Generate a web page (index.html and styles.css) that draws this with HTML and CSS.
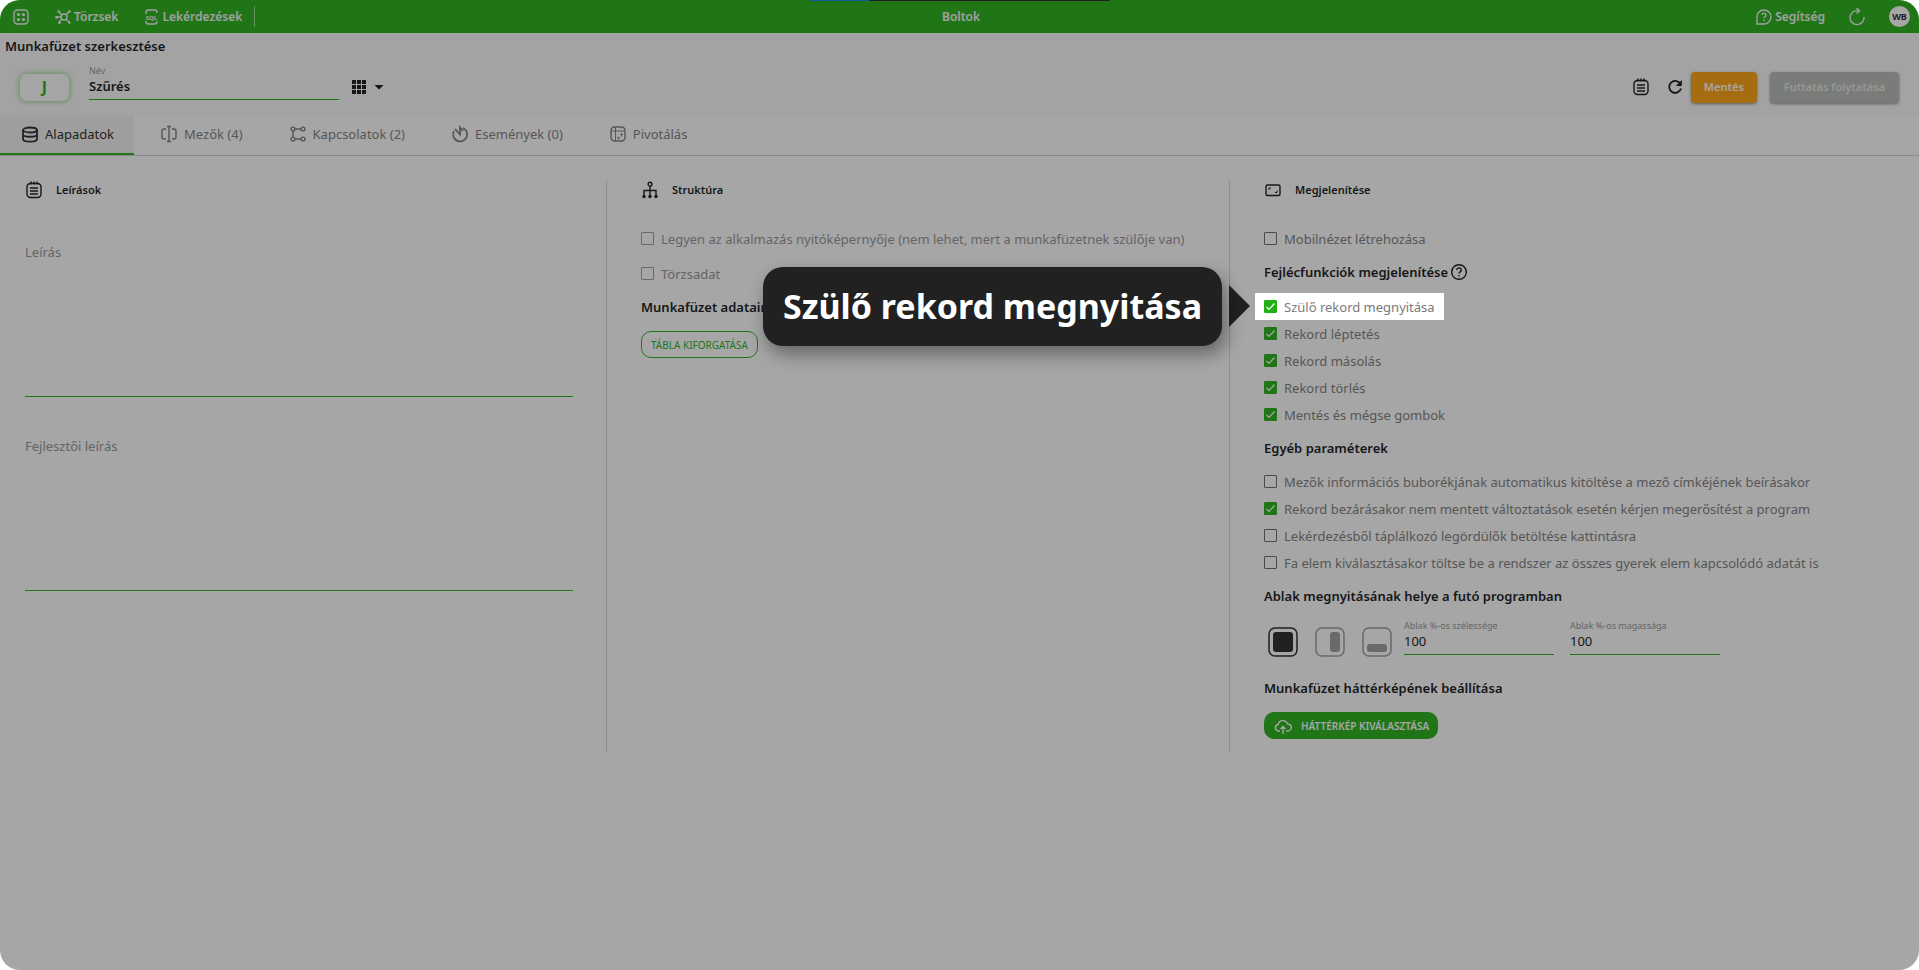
FILE: index.html
```html
<!DOCTYPE html>
<html lang="hu">
<head>
<meta charset="utf-8">
<title>Boltok</title>
<link rel="stylesheet" href="styles.css">
</head>
<body>
<svg class="defs" aria-hidden="true">
  <symbol id="i-notes" viewBox="0 0 18 18"><rect x="2" y="2.5" width="14" height="14" rx="3.5"/><path d="M6 .5v3M9 .5v3M12 .5v3M5 7h8M5 10h8M5 13h8"/></symbol>
  <symbol id="i-help" viewBox="0 0 18 18"><circle cx="9" cy="9" r="7.3"/><path d="M6.8 7a2.2 2.2 0 1 1 3.3 2c-.8.4-1.1.8-1.1 1.6M9 12v1.4"/></symbol>
</svg>
<div class="page">
  <header class="topbar">
    <nav class="topnav">
      <button class="iconbtn" aria-label="Alkalmazások"><svg class="icon" viewBox="0 0 18 18"><rect x="2" y="2" width="14" height="14" rx="3.5"/><g class="solid"><circle cx="6.5" cy="6.5" r="1.6"/><circle cx="11.5" cy="6.5" r="1.6"/><circle cx="6.5" cy="11.5" r="1.6"/><circle cx="11.5" cy="11.5" r="1.6"/></g></svg></button>
      <a class="toplink" href="#"><svg class="icon" viewBox="0 0 18 18"><circle cx="10" cy="9" r="3"/><path d="M7.8 6.800 5 4M12 6.800 15 4M7.800 11.200 5 14M12 11.200 15 14M7 9H3"/><g class="solid"><circle cx="4.800" cy="3.500" r="1.300"/><circle cx="15.300" cy="3.500" r="1.300"/><circle cx="5.500" cy="14.800" r="1.300"/><circle cx="15.300" cy="14.500" r="1.300"/><circle cx="2.500" cy="9.400" r="1.300"/></g></svg>Törzsek</a>
      <a class="toplink" href="#"><svg class="icon" viewBox="0 0 18 18"><path d="M4 6V4.500A2.500 2.500 0 0 1 6.500 2h6A2.500 2.500 0 0 1 15 4.500V5M4 13v.500A2.500 2.500 0 0 0 6.500 16h6a2.500 2.500 0 0 0 2.500-2.500V13"/><text class="sqltext" x="9.5" y="11.5">SQL</text></svg>Lekérdezések</a>
    </nav>
    <h1 class="apptitle">Boltok</h1>
    <div class="topright">
      <a class="toplink" href="#"><svg class="icon" viewBox="0 0 18 18"><path d="M2 16h7a7 7 0 1 0-7-7z"/><path d="M7.200 7a1.900 1.900 0 1 1 2.800 1.700c-.7.400-1 .7-1 1.500M9 11.800V13"/></svg>Segítség</a>
      <button class="iconbtn" aria-label="Frissítés"><svg class="icon" viewBox="0 0 18 18"><path d="M10 2.700A7 7 0 1 0 16 9M8.500 0l3 2.700L8.500 5.400"/></svg></button>
      <span class="avatar">WB</span>
    </div>
  </header>
  <section class="bookbar">
    <h2 class="booktitle">Munkafüzet szerkesztése</h2>
    <div class="bookrow">
      <button class="badge">J</button>
      <div class="field field-name"><label for="name">Név</label><input id="name" type="text" value="Szűrés"></div>
      <button class="gridbtn" aria-label="Nézet"><svg class="gridicon" viewBox="0 0 32 16"><path d="M0 1h4v4H0zM5 1h4v4H5zM10 1h4v4h-4zM0 6h4v4H0zM5 6h4v4H5zM10 6h4v4h-4zM0 11h4v4H0zM5 11h4v4H5zM10 11h4v4h-4zM22.500 6h9L27 10.500z"/></svg></button>
      <div class="bookactions">
        <button class="iconbtn" aria-label="Jegyzetek"><svg class="icon"><use href="#i-notes"/></svg></button>
        <button class="iconbtn" aria-label="Újratöltés"><svg class="icon" viewBox="0 0 18 18"><path class="thick" d="M14.200 5.500A6 6 0 1 0 15 10.500"/><path class="solid" d="M15.800 2v6H9.800z"/></svg></button>
        <button class="btn btn-save">Mentés</button>
        <button class="btn btn-run">Futtatás folytatása</button>
      </div>
    </div>
  </section>
  <nav class="tabs">
    <a class="tab active" href="#"><svg class="icon" viewBox="0 0 18 18"><ellipse class="thick" cx="9" cy="5" rx="7" ry="2.500"/><path class="thick" d="M2 5v9c0 3.600 14 3.600 14 0V5M2 9.500c0 3 14 3 14 0"/></svg>Alapadatok</a>
    <a class="tab" href="#"><svg class="icon" viewBox="0 0 18 18"><path d="M9 2v14M7 1.500h4M7 16.500h4M6 4H4a2 2 0 0 0-2 2v6a2 2 0 0 0 2 2h2M12 4h2a2 2 0 0 1 2 2v6a2 2 0 0 1-2 2h-2"/></svg>Mezők (4)</a>
    <a class="tab" href="#"><svg class="icon" viewBox="0 0 18 18"><circle cx="4" cy="4" r="1.900"/><circle cx="14" cy="4" r="1.900"/><circle cx="4" cy="14" r="1.900"/><circle cx="14" cy="14" r="1.900"/><path d="M6 4h6M6 14h6M4 6v6"/></svg>Kapcsolatok (2)</a>
    <a class="tab" href="#"><svg class="icon" viewBox="0 0 18 18"><path class="thick" d="M12 3A7 7 0 1 1 3 6M4 4l5 5.500V2.500L12 6"/></svg>Események (0)</a>
    <a class="tab" href="#"><svg class="icon" viewBox="0 0 18 18"><rect x="2" y="2" width="14" height="14" rx="3.500"/><g class="thin"><path d="M2 6h14M6.500 2v14M8.500 13h2.500M12.500 8.500v3M9.800 11.800 8.500 13l1.300 1.200M11.300 9.800l1.200-1.300 1.200 1.300"/></g></svg>Pivotálás</a>
  </nav>
  <main class="columns">
    <section class="col col-text">
      <h3 class="colhead"><svg class="icon"><use href="#i-notes"/></svg>Leírások</h3>
      <div class="area"><label for="desc">Leírás</label><textarea id="desc"></textarea></div>
      <div class="area"><label for="devdesc">Fejlesztői leírás</label><textarea id="devdesc"></textarea></div>
    </section>
    <section class="col">
      <h3 class="colhead"><svg class="icon" viewBox="0 0 18 18"><circle cx="9" cy="3.200" r="1.900"/><path d="M9 5v11M3 15V9.500h12V15"/><g class="solid"><circle cx="3" cy="15.500" r="1.700"/><circle cx="9" cy="15.500" r="1.700"/><circle cx="15" cy="15.500" r="1.700"/></g></svg>Struktúra</h3>
      <label class="check alone muted"><input type="checkbox" disabled>Legyen az alkalmazás nyitóképernyője (nem lehet, mert a munkafüzetnek szülője van)</label>
      <label class="check muted"><input type="checkbox" disabled>Törzsadat</label>
      <h4 class="subhead near">Munkafüzet adatainak</h4>
      <button class="pill pill-outline">TÁBLA KIFORGATÁSA</button>
    </section>
    <section class="col">
      <h3 class="colhead"><svg class="icon" viewBox="0 0 18 18"><rect x="2" y="4" width="14" height="10.500" rx="1.500"/><path class="thin" d="M5 9V7h2M11 11.500h2v-2"/></svg>Megjelenítése</h3>
      <label class="check alone"><input type="checkbox">Mobilnézet létrehozása</label>
      <h4 class="subhead near">Fejlécfunkciók megjelenítése<svg class="icon"><use href="#i-help"/></svg></h4>
      <div class="checks">
        <div class="spotlight">
          <label class="check"><input type="checkbox" checked>Szülő rekord megnyitása</label>
          <div class="tip" role="tooltip">Szülő rekord megnyitása</div>
        </div>
        <label class="check"><input type="checkbox" checked>Rekord léptetés</label>
        <label class="check"><input type="checkbox" checked>Rekord másolás</label>
        <label class="check"><input type="checkbox" checked>Rekord törlés</label>
        <label class="check"><input type="checkbox" checked>Mentés és mégse gombok</label>
      </div>
      <h4 class="subhead">Egyéb paraméterek</h4>
      <div class="checks">
        <label class="check"><input type="checkbox">Mezők információs buborékjának automatikus kitöltése a mező címkéjének beírásakor</label>
        <label class="check"><input type="checkbox" checked>Rekord bezárásakor nem mentett változtatások esetén kérjen megerősítést a program</label>
        <label class="check"><input type="checkbox">Lekérdezésből táplálkozó legördülők betöltése kattintásra</label>
        <label class="check"><input type="checkbox">Fa elem kiválasztásakor töltse be a rendszer az összes gyerek elem kapcsolódó adatát is</label>
      </div>
      <h4 class="subhead">Ablak megnyitásának helye a futó programban</h4>
      <div class="placement">
        <div class="places">
          <button class="place on" aria-label="Teljes"><svg viewBox="0 0 30 30"><rect x="1" y="1" width="28" height="28" rx="6"/><rect class="solid" x="5" y="5" width="20" height="20" rx="3"/></svg></button>
          <button class="place" aria-label="Jobb oldal"><svg viewBox="0 0 30 30"><rect x="1" y="1" width="28" height="28" rx="6"/><rect class="solid" x="15" y="5" width="10" height="20" rx="3"/></svg></button>
          <button class="place" aria-label="Alul"><svg viewBox="0 0 30 30"><rect x="1" y="1" width="28" height="28" rx="6"/><rect class="solid" x="5" y="17" width="20" height="8" rx="3"/></svg></button>
        </div>
        <div class="field"><label for="w">Ablak %-os szélessége</label><input id="w" type="text" value="100"></div>
        <div class="field"><label for="h">Ablak %-os magassága</label><input id="h" type="text" value="100"></div>
      </div>
      <h4 class="subhead">Munkafüzet háttérképének beállítása</h4>
      <button class="pill pill-fill"><svg class="icon" viewBox="0 0 18 18"><path d="M6 14H4.500a3.300 3.300 0 0 1-.5-6.500 5 5 0 0 1 9.600-.5 3.500 3.500 0 0 1 .4 7H12M9 17V9.500M6.500 12 9 9.500l2.500 2.500"/></svg>HÁTTÉRKÉP KIVÁLASZTÁSA</button>
    </section>
  </main>
  <div class="progress"></div>
</div>
</body>
</html>
```
FILE: styles.css
```css
:root {
  --green: #20b012;
  --ink: #101014;
  --grey: #7a7a7a;
  --muted: #929292;
}
* { box-sizing: border-box; }
body {
  margin: 0;
  background: #fff;
  color: var(--ink);
  font: 13px/20px "Noto Sans", "Open Sans", sans-serif;
}
h1, h2, h3, h4 { margin: 0; font-size: 13px; font-weight: 600; }
button {
  padding: 0;
  border: 0;
  background: none;
  color: inherit;
  font: inherit;
}
a { color: inherit; text-decoration: none; }
.defs { position: absolute; width: 0; height: 0; }
.icon {
  flex: none;
  display: block;
  width: 18px;
  height: 18px;
  fill: none;
  stroke: currentColor;
  stroke-width: 1.4;
}
.thick { stroke-width: 1.8; }
.thin { stroke-width: 1; }
.solid { fill: currentColor; stroke: none; }
.sqltext {
  fill: currentColor;
  stroke: none;
  font-size: 6px;
  font-weight: 700;
  text-anchor: middle;
}
.page {
  position: relative;
  min-height: 100vh;
  overflow: hidden;
  border-radius: 20px;
  background: #fff;
}

.topbar {
  display: grid;
  grid-template-columns: 1fr auto 1fr;
  align-items: center;
  height: 33px;
  padding: 0 9px 0 12px;
  background: var(--green);
  color: #f5f5f5;
}
.topnav, .topright { display: flex; align-items: center; }
.topnav {
  justify-self: start;
  gap: 24px;
  height: 21px;
  padding-right: 12px;
  border-right: 1px solid #8fd98a;
}
.topright { justify-self: end; gap: 23px; }
.toplink {
  display: flex;
  align-items: center;
  gap: 2px;
  font-size: 12px;
  font-weight: 600;
}
.apptitle { font-size: 12px; font-weight: 600; }
.avatar {
  width: 21px;
  border-radius: 50%;
  background: #fff;
  color: #222;
  font-size: 9px;
  font-weight: 700;
  line-height: 21px;
  text-align: center;
}
.progress {
  position: absolute;
  top: 0;
  left: 50%;
  z-index: 3;
  width: 301px;
  height: 1px;
  margin-left: -151px;
  background: linear-gradient(to right, #0f5c9c 20%, #212121 20%);
}

.bookbar { background: #fafafa; height: 82px; padding: 3px 20px 0 5px; }
.bookrow { display: flex; align-items: center; height: 62px; padding-left: 15px; }
.badge {
  width: 49px;
  height: 27px;
  border-radius: 7px;
  background: #fff;
  box-shadow: 0 0 6px rgba(32, 176, 18, .6);
  color: var(--green);
  font-size: 16px;
  font-weight: 700;
}
.field {
  display: flex;
  flex-direction: column;
  align-self: flex-start;
  width: 150px;
}
.field label { color: var(--muted); font-size: 9px; line-height: 12px; }
.field input {
  width: 100%;
  height: 23px;
  padding: 0 0 4px;
  border: 0;
  border-bottom: 1px solid var(--green);
  background: none;
  color: var(--ink);
  font: inherit;
}
.field-name { width: 250px; margin: 9px 13px 0 20px; }
.field-name input { font-weight: 600; }
.gridbtn { height: 16px; }
.gridicon { display: block; width: 32px; height: 16px; fill: var(--ink); }
.bookactions { display: flex; align-items: center; margin-left: auto; }
.bookactions .iconbtn { margin-right: 16px; }
.bookactions .iconbtn + .iconbtn { margin-right: 7px; }
.btn {
  height: 31px;
  padding: 0 13px;
  border-radius: 4px;
  box-shadow: 0 1px 3px #888;
  color: #fff;
  font-size: 11px;
  font-weight: 600;
}
.btn-save { background: #fda105; }
.btn-run { margin-left: 13px; padding: 0 14px; background: #b5b9b2; color: #e6e6e6; }

.tabs {
  display: flex;
  gap: 5px;
  height: 41px;
  border-bottom: 1px solid #d0d0d0;
}
.tab {
  display: flex;
  align-items: center;
  gap: 6px;
  height: 40px;
  padding: 0 20px 0 21px;
  border-bottom: 2px solid transparent;
  color: var(--grey);
}
.active { border-color: var(--green); background: #f2f2f2; color: #222; }

.columns {
  display: grid;
  grid-template-columns: 606fr 623fr 690fr;
  padding-top: 25px;
}
.col { min-height: 572px; padding: 0 33px 14px 34px; border-left: 1px solid #d6d6d6; }
.col-text { padding-left: 25px; border-left: 0; }
.colhead {
  display: flex;
  align-items: center;
  gap: 13px;
  height: 18px;
  font-size: 11px;
}
.col-text .colhead { margin-bottom: 43px; }
.area {
  display: flex;
  flex-direction: column;
  height: 155px;
  margin-bottom: 39px;
  color: var(--muted);
}
.area textarea {
  flex: 1;
  width: 100%;
  padding: 0;
  border: 0;
  border-bottom: 1px solid var(--green);
  background: none;
  font: inherit;
  resize: none;
}
.check {
  display: flex;
  align-items: center;
  gap: 7px;
  height: 27px;
  color: var(--grey);
  white-space: nowrap;
}
.check.alone { margin: 26px 0 8px; }
.check.muted { color: var(--muted); }
.check input {
  flex: none;
  width: 13px;
  height: 13px;
  margin: 0;
  border: 1px solid #666;
  border-radius: 1px;
  appearance: none;
  background: #fff;
}
.check.muted input { border-color: #999; }
.check input:checked {
  border-color: var(--green);
  background: var(--green) url("data:image/svg+xml,%3Csvg xmlns='http://www.w3.org/2000/svg' viewBox='0 0 11 11'%3E%3Cpath d='M1.500 6 4 8.500 9.500 2.500' fill='none' stroke='white' stroke-width='1.200'/%3E%3C/svg%3E");
}
.subhead {
  display: flex;
  align-items: center;
  gap: 2px;
  height: 20px;
  margin: 10px 0;
  white-space: nowrap;
}
.subhead.near { margin-bottom: 11px; }
.checks { display: flex; flex-direction: column; align-items: start; }
.spotlight {
  position: relative;
  z-index: 2;
  margin: 0 -9px;
  padding: 0 9px;
  background: #fff;
  box-shadow: 0 0 0 4000px rgba(33, 33, 33, .4);
}
.spotlight::before {
  content: "";
  position: absolute;
  top: -8px;
  right: calc(100% + 5px);
  border: solid transparent;
  border-width: 21px 0 21px 21px;
  border-left-color: #212121;
}
.tip {
  position: absolute;
  top: -26px;
  right: calc(100% + 33px);
  padding: 0 20px;
  border-radius: 20px;
  background: #212121;
  box-shadow: 4px 8px 18px rgba(0, 0, 0, .4);
  color: #fff;
  font-size: 34px;
  font-weight: 700;
  line-height: 79px;
  white-space: nowrap;
}
.placement { display: flex; gap: 16px; height: 44px; margin: 14px 0; }
.places { display: flex; align-items: center; gap: 17px; padding-left: 4px; margin-right: -4px; }
.place { width: 30px; height: 30px; color: #999; }
.place svg { display: block; fill: none; stroke: currentColor; stroke-width: 1.5; }
.place .solid { fill: currentColor; stroke: none; }
.place.on { color: #222; }
.pill {
  display: flex;
  align-items: center;
  gap: 9px;
  height: 27px;
  margin-top: 14px;
  border-radius: 10px;
  font-size: 10px;
}
.pill-outline { padding: 0 9px; border: 1px solid var(--green); color: var(--green); }
.pill-fill { padding: 0 9px 0 10px; background: var(--green); color: #fff; font-weight: 600; }
```
